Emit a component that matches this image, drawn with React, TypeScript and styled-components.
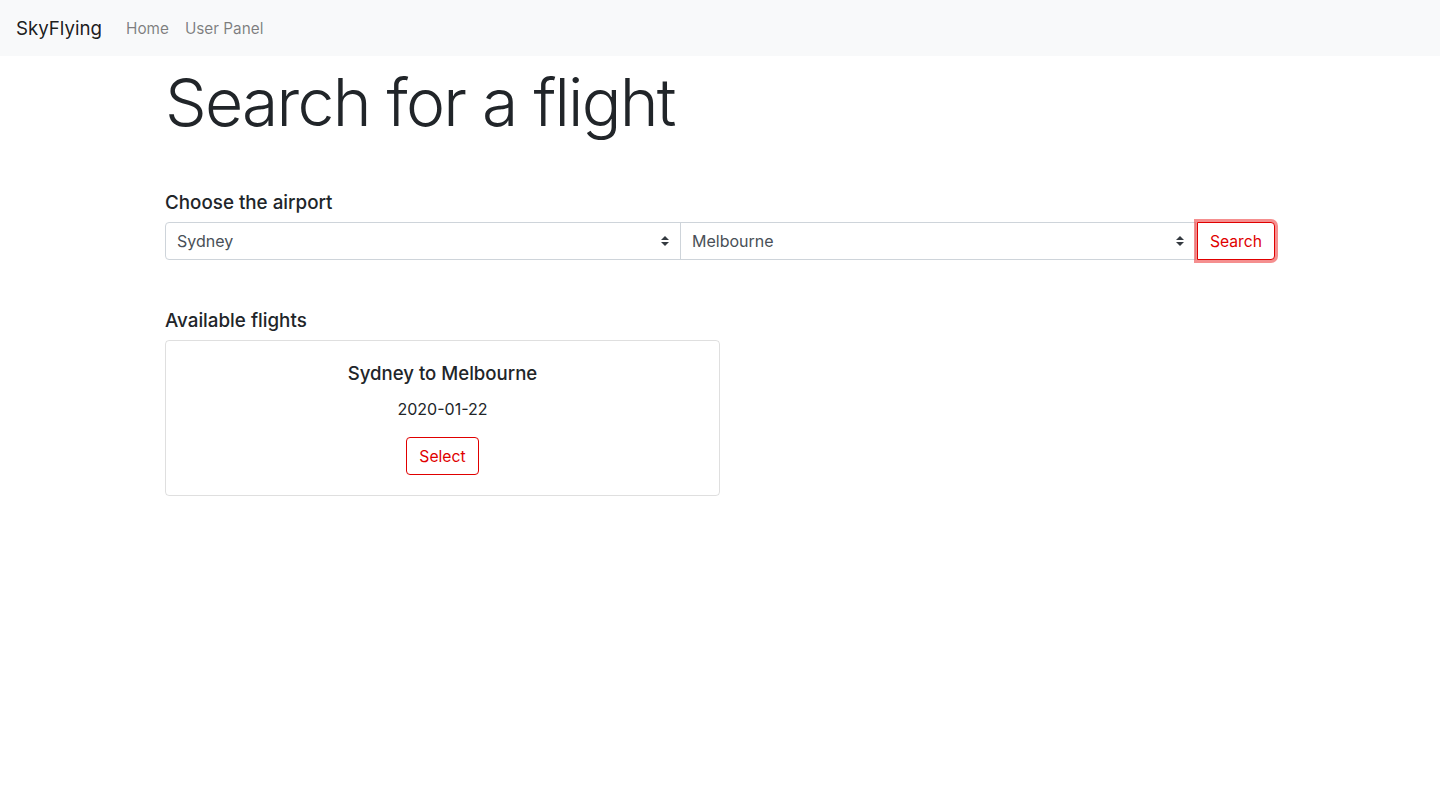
import React from "react";
import styled, { createGlobalStyle } from "styled-components";

const GlobalStyle = createGlobalStyle`
  *, *::before, *::after { box-sizing: border-box; }
  body {
    margin: 0;
    font-family: Inter, "Noto Sans", "Liberation Sans", sans-serif;
    font-size: 16px;
    line-height: 1.5;
    color: #212529;
    background: #fff;
  }
`;

const NavBar = styled.nav`
  display: flex;
  align-items: center;
  height: 56px;
  padding: 9px 16px 7px;
  background: #f8f9fa;
`;

const Brand = styled.a`
  font-size: 18.7px;
  line-height: 30px;
  color: rgba(0, 0, 0, 0.9);
  margin-right: 16px;
  text-decoration: none;
`;

const NavLink = styled.a`
  padding: 8px;
  font-size: 15.3px;
  color: rgba(0, 0, 0, 0.5);
  text-decoration: none;
`;

const Container = styled.main`
  width: 1140px;
  margin: 0 auto;
  padding: 0 15px;
`;

const Title = styled.h1`
  font-size: 66px;
  font-weight: 300;
  line-height: 92px;
  margin: 0 0 43px;
  letter-spacing: -1.75px;
`;

const SectionLabel = styled.h5`
  font-size: 18.8px;
  font-weight: 500;
  line-height: 24px;
  margin: 0 0 7px;
`;

const InputGroup = styled.div`
  display: flex;
  align-items: stretch;
  height: 38px;
  margin-bottom: 49px;
`;

const arrow =
  "data:image/svg+xml,%3csvg xmlns='http://www.w3.org/2000/svg' width='4' height='5' viewBox='0 0 4 5'%3e%3cpath fill='%23343a40' d='M2 0L0 2h4zm0 5L0 3h4z'/%3e%3c/svg%3e";

const Select = styled.select<{ $first?: boolean }>`
  flex: 1 1 0;
  min-width: 0;
  height: 38px;
  padding: 6px 28px 6px 11px;
  font-family: inherit;
  font-size: 16px;
  color: #495057;
  background: #fff url("${arrow}") no-repeat right 11px center / 8px 10px;
  border: 1px solid #ced4da;
  border-radius: ${(p) => (p.$first ? "4px 0 0 4px" : "0")};
  margin-left: ${(p) => (p.$first ? "0" : "-1px")};
  appearance: none;
  -webkit-appearance: none;
  outline: none;
`;

const OutlineButton = styled.button<{ $focused?: boolean; $grouped?: boolean }>`
  font-family: inherit;
  font-size: 15.7px;
  line-height: 24px;
  padding: 7px 12px 5px;
  color: #e00000;
  background: #fff;
  border: 1px solid #e00000;
  border-radius: ${(p) => (p.$grouped ? "0 4px 4px 0" : "4px")};
  margin-left: ${(p) => (p.$grouped ? "1px" : "0")};
  box-shadow: ${(p) => (p.$focused ? "0 0 0 3px rgba(238, 68, 68, 0.6)" : "none")};
  cursor: pointer;
  position: relative;
  z-index: 1;
`;

const Grid = styled.div`
  display: grid;
  grid-template-columns: 555px;
`;

const Card = styled.div`
  border: 1px solid rgba(0, 0, 0, 0.125);
  border-radius: 4px;
  padding: 20px;
  text-align: center;
`;

const CardTitle = styled.h5`
  font-size: 18.6px;
  font-weight: 500;
  line-height: 24px;
  margin: 0 0 12px;
`;

const CardText = styled.p`
  margin: 0 0 16px;
  line-height: 24px;
`;

export default function App() {
  return (
    <>
      <GlobalStyle />
      <NavBar>
        <Brand href="#">SkyFlying</Brand>
        <NavLink href="#">Home</NavLink>
        <NavLink href="#">User Panel</NavLink>
      </NavBar>
      <Container>
        <Title>Search for a flight</Title>
        <SectionLabel>Choose the airport</SectionLabel>
        <InputGroup>
          <Select $first defaultValue="Sydney">
            <option>Sydney</option>
            <option>Melbourne</option>
          </Select>
          <Select defaultValue="Melbourne">
            <option>Sydney</option>
            <option>Melbourne</option>
          </Select>
          <OutlineButton $focused $grouped>Search</OutlineButton>
        </InputGroup>
        <SectionLabel>Available flights</SectionLabel>
        <Grid>
          <Card>
            <CardTitle>Sydney to Melbourne</CardTitle>
            <CardText>2020-01-22</CardText>
            <OutlineButton>Select</OutlineButton>
          </Card>
        </Grid>
      </Container>
    </>
  );
}
